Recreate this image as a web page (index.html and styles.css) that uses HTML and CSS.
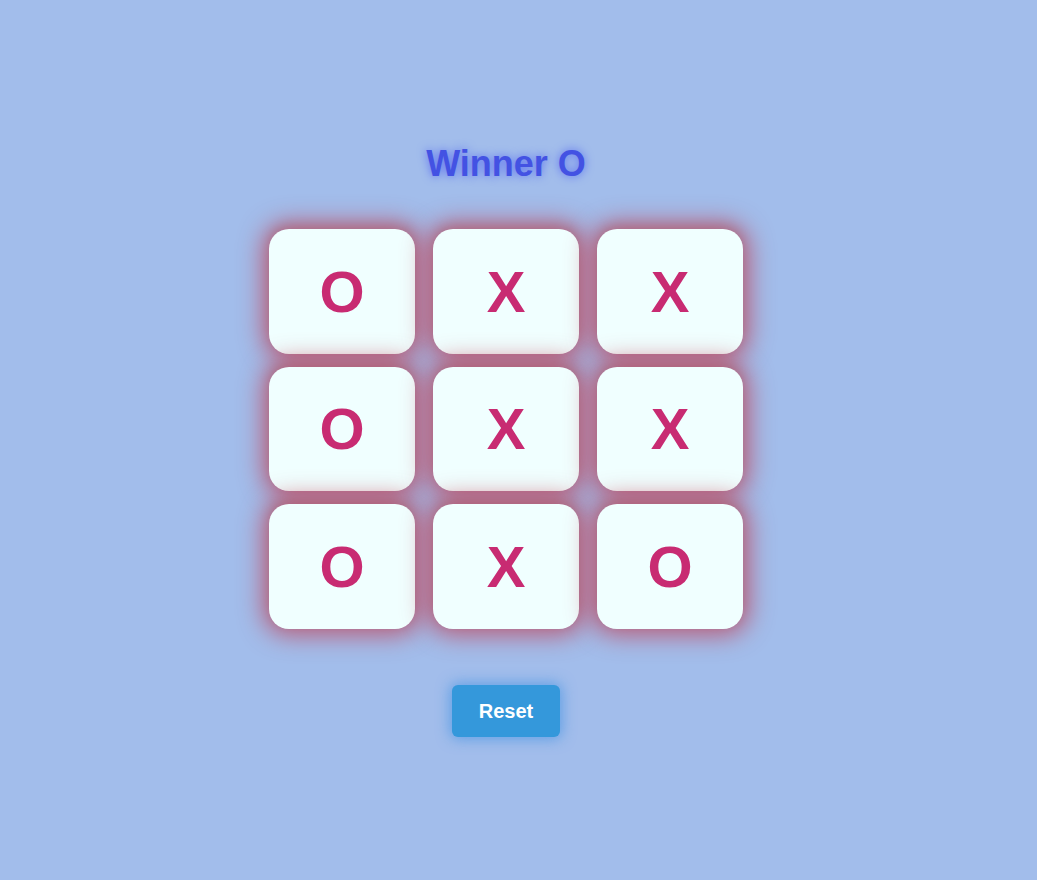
FILE: index.html
```html
<!DOCTYPE html>
<html>
<head>
<meta charset="utf-8">
<link rel="stylesheet" href="styles.css">
</head>
<body>
<main class="game">
  <h1 class="title">Winner O</h1>
  <div class="board">
    <div class="cell">O</div>
    <div class="cell">X</div>
    <div class="cell">X</div>
    <div class="cell">O</div>
    <div class="cell">X</div>
    <div class="cell">X</div>
    <div class="cell">O</div>
    <div class="cell">X</div>
    <div class="cell">O</div>
  </div>
  <button class="reset">Reset</button>
</main>
</body>
</html>
```
FILE: styles.css
```css
html, body {
  margin: 0;
  padding: 0;
}
body {
  background: #a2bdeb;
  font-family: "Liberation Sans", Arial, sans-serif;
  min-height: 880px;
}
.game {
  width: 1012px;
  display: flex;
  flex-direction: column;
  align-items: center;
  padding-top: 143px;
}
.title {
  margin: 0;
  font-size: 36px;
  line-height: 41px;
  font-weight: bold;
  color: #4352e3;
  text-shadow: 0 0 10px #5a6ef0;
}
.board {
  margin-top: 45px;
  display: grid;
  grid-template-columns: repeat(3, 146px);
  grid-auto-rows: 124.5px;
  column-gap: 18px;
  row-gap: 13px;
}
.cell {
  background: #f0ffff;
  border-radius: 20px;
  box-shadow: 0 0 24px 6px rgba(195, 55, 75, 0.72), 0 -5px 10px rgba(120, 110, 110, 0.22);
  display: flex;
  align-items: center;
  justify-content: center;
  font-size: 58px;
  font-weight: bold;
  color: #c82b72;
}
.reset {
  margin-top: 56px;
  background: #3498db;
  color: #fff;
  border: none;
  border-radius: 6px;
  font-family: "Liberation Sans", Arial, sans-serif;
  font-size: 20px;
  font-weight: bold;
  line-height: 22px;
  padding: 15px 27px;
  box-shadow: 0 0 14px 2px rgba(52, 140, 225, 0.6);
}
```
